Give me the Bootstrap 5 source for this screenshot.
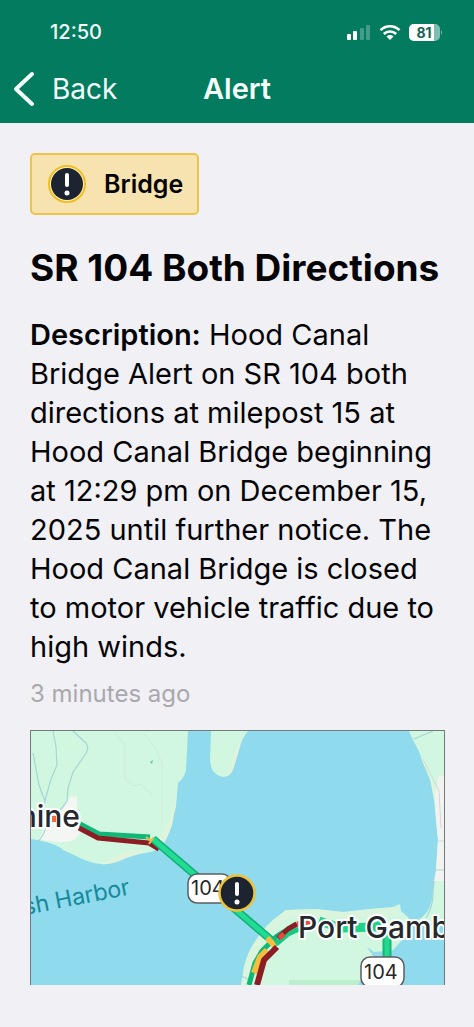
<!DOCTYPE html>
<html lang="en">
<head>
<meta charset="utf-8">
<meta name="viewport" content="width=device-width, initial-scale=1">
<title>Alert</title>
<link rel="stylesheet" href="https://cdn.jsdelivr.net/npm/bootstrap@5.3.0/dist/css/bootstrap.min.css">
<style>
  body { background: #f1f0f5; color: #050507; font-family: Inter, "Liberation Sans", sans-serif; }
  .app-header { background: #037b5f; color: #f4fffc; }
  .status-row { padding: 16px 32px 0 50px; height: 48px; font-size: 20px; font-weight: 500; line-height: 32px; }
  .title-row { height: 75px; padding: 6px 14px 0; }
  .back-btn { font-size: 28px; line-height: 40px; color: inherit; gap: 16px; }
  .screen-title { font-size: 29px; line-height: 40px; font-weight: 600; }
  .page-body { padding: 30px 29px 40px 30px; }
  .category-chip { background: #f7e3b0; border: 2px solid #ecc44c; border-radius: 5px; height: 62px; padding: 0 14px 0 16px; gap: 18px; font-size: 25px; line-height: 32px; font-weight: 600; }
  .alert-heading-text { font-size: 37px; line-height: 44px; font-weight: 700; margin: 31px 0 25px; }
  .alert-copy { font-size: 29px; line-height: 39px; margin: 0 0 12px; }
  .alert-copy strong { font-weight: 600; }
  .posted-at { font-size: 24px; line-height: 32px; color: #a9a8ad; margin: 0 0 20px; }
  .map-frame { border: 1px solid #75797b; border-bottom: 0; }
</style>
</head>
<body>
<header class="app-header">
  <div class="status-row d-flex justify-content-between align-items-center">
    <span>12:50</span>
    <svg width="96" height="20" viewBox="0 0 96 20" role="img" aria-label="Signal, Wi-Fi, battery 81 percent">
      <g fill="#fff">
        <rect x="1" y="12" width="4" height="6" rx="1"/><rect x="7" y="9" width="4" height="9" rx="1"/>
        <rect x="14" y="6" width="4" height="12" rx="1" opacity=".25"/><rect x="20" y="3" width="4" height="15" rx="1" opacity=".25"/>
        <path d="M40.500 14.500L44 18l3.500-3.500a5 5 0 0 0-7 0Z"/>
        <rect x="63" y="2" width="31" height="17" rx="5" opacity=".5"/>
        <path d="M68 2h20v17H68a5 5 0 0 1-5-5V7a5 5 0 0 1 5-5Z"/>
        <path d="M95 8q2 2 0 5Z" opacity=".5"/>
      </g>
      <g fill="none" stroke="#fff" stroke-width="2.600"><path d="M34.500 8.200a13.500 13.500 0 0 1 19 0"/><path d="M37.800 12a9 9 0 0 1 12.400 0"/></g>
      <text x="78" y="16" text-anchor="middle" font-size="14" font-weight="700" fill="#12644f">81</text>
    </svg>
  </div>
  <nav class="title-row row g-0 align-items-center">
    <div class="col">
      <button type="button" class="back-btn btn p-0 border-0 d-flex align-items-center">
        <svg width="22" height="36" viewBox="0 0 22 36" fill="none" stroke="currentColor" stroke-width="4" stroke-linecap="round" stroke-linejoin="round" aria-hidden="true"><path d="M18 3L2 18l16 15"/></svg>
        <span>Back</span>
      </button>
    </div>
    <h1 class="screen-title col-auto mb-0">Alert</h1>
    <div class="col"></div>
  </nav>
</header>

<main class="page-body">
  <div class="category-chip d-inline-flex align-items-center">
    <svg width="38" height="38" viewBox="0 0 38 38" aria-hidden="true">
      <circle cx="19" cy="19" r="18" fill="#fff0b8" stroke="#f0be22" stroke-width="2"/><circle cx="19" cy="19" r="16" fill="#1b2430"/>
      <path d="M19 10v10" stroke="#fff" stroke-width="4" stroke-linecap="round"/><circle cx="19" cy="28" r="2.500" fill="#fff"/>
    </svg>
    <span>Bridge</span>
  </div>
  <h2 class="alert-heading-text">SR 104 Both Directions</h2>
  <p class="alert-copy"><strong>Description:</strong> Hood Canal Bridge Alert on SR 104 both directions at milepost 15 at Hood Canal Bridge beginning at 12:29 pm on December 15, 2025 until further notice. The Hood Canal Bridge is closed to motor vehicle traffic due to high winds.</p>
  <p class="posted-at">3 minutes ago</p>

  <div class="map-frame overflow-hidden">
    <svg class="d-block w-100" viewBox="0 0 413 254" role="img" aria-label="Map of the Hood Canal Bridge">
      <rect width="413" height="254" fill="#8fdaed"/>
      <!-- shorelines -->
      <g fill="#d1f7e0">
        <path d="M0 0H157L155 39Q154 46 147 52L145 76L138 102Q134 112 130 117L120 121Q105 123 95 127Q80 134 70 133Q58 132 45 125L32 119Q26 112 0 108Z"/>
        <path d="M180 0L179 29Q180 37 182 40Q186 45 192 46Q199 46 202 36L207 19Q210 9 217 0Z"/>
        <path d="M378 0Q383 12 388 20L392 32Q398 42 400 52Q404 70 405 89L407 109L405 139Q403 160 400 172Q398 182 386 190L413 195V0Z"/>
        <path d="M210 254L213 236Q217 219 225 209Q232 197 242 189L255 179L285 178L312 181L338 178L362 176L369 173L370 180L378 187L374 206L362 219L337 232L327 254Z"/>
      </g>
      <g fill="#e1f3dc">
        <path d="M145 64Q140 74 140 86Q136 98 126 110L130 114Q139 104 142 90Z"/>
        <path d="M205 17Q201 29 199 40L194 45Q200 46 203 36L211 9Z"/>
        <path d="M70 133Q82 134 95 127L119 119L96 120Z"/>
        <path d="M378 0Q383 12 388 20L392 32L400 52L404 75L407 60L397 40Z" opacity=".7"/>
        <path d="M255 179L285 178L312 181L362 177L369 184L312 187L258 186Q228 205 218 254H210L213 236Q219 212 242 189Z" opacity=".65"/>
      </g>
      <path d="M258 249H330L327 254H258Z" fill="#bbefcd"/>
      <path d="M413 44L407 46L406 57L404 63L405 89L407 109L405 139L403 150H413Z" fill="#f2f3f1"/>
      <path d="M39 66L46 65V91Q54 103 41 110Q26 113 8 108L13 98L28 84Z" fill="#f4f6f3"/>
      <path d="M336 216l7 5 11-1-4 7-8-2z" fill="#95dbe8"/>
      <!-- creeks and minor roads -->
      <g fill="none" stroke="#a7d5d6" stroke-width="1.200">
        <path d="M2 22L5 38L8 54L14 70"/><path d="M22 0L25 16L26 34L20 48L15 66L13 74"/>
        <path d="M42 0L55 12Q59 17 54 24L42 41L37 57L36 70L31 77L18 90L12 104L6 112"/>
        <path d="M383 8L402 0M401 139H413M395 187Q402 176 402 163V148M210 245L219 249"/>
      </g>
      <g fill="none" stroke="#cdeadb" stroke-width="1"><path d="M84 2L94 14V48L102 55L110 53L122 65"/><path d="M112 2L123 15L131 32V92"/></g>
      <path d="M392 28L399 42L408 60L410 97M407 110H413" fill="none" stroke="#d3d9d6" stroke-width="1"/>
      <path d="M119 31l3-2-1 4z" fill="#71bda9"/>
      <!-- traffic -->
      <g fill="none" stroke-linejoin="round">
        <path d="M49 93L68 103L119 106" stroke="#10b878" stroke-width="5"/>
        <path d="M48 97L67 107L118 112L128 118" stroke="#8c1d23" stroke-width="5"/>
        <path d="M122 108L246 214" stroke="#0eae76" stroke-width="8"/>
        <path d="M122 108L246 214" stroke="#23dc93" stroke-width="5"/>
        <path d="M115 106l5 4 2-3-4 6" stroke="#efb947" stroke-width="2"/>
        <path d="M218 254L224 232L231 220L246 205L265 193" stroke="#10b878" stroke-width="5"/>
        <path d="M223 242L229 226L236 219" stroke="#f4be40" stroke-width="6"/>
        <path d="M236 207L244 215" stroke="#f4be40" stroke-width="6"/>
        <path d="M226 254L233 229L246 216" stroke="#8c1d23" stroke-width="6"/>
        <path d="M245 213L257 203L268 198" stroke="#18c784" stroke-width="5"/>
        <path d="M247 207L257 198L266 193" stroke="#8c1d23" stroke-width="5"/>
        <path d="M248 207l5-4M266 193L283 190" stroke="#e6493f" stroke-width="5"/>
        <path d="M288 190L310 197L345 196L352 193" stroke="#20d28c" stroke-width="9"/>
        <path d="M356 203V228" stroke="#10b878" stroke-width="9"/><path d="M356 203V228" stroke="#25d78f" stroke-width="5"/>
      </g>
      <!-- route shields -->
      <g fill="#fff" stroke="#5b5e61" stroke-width="1.500"><rect x="157" y="143" width="43" height="29" rx="9"/><rect x="330" y="226" width="43" height="30" rx="9"/></g>
      <g font-size="20" fill="#26282b"><text x="160" y="164">104</text><text x="333" y="248">104</text></g>
      <!-- alert pin -->
      <circle cx="206" cy="162" r="17.500" fill="#1b2430" stroke="#efc138" stroke-width="2.500"/>
      <path d="M206 153v10" stroke="#fff" stroke-width="4" stroke-linecap="round"/><circle cx="206" cy="171" r="2.500" fill="#fff"/>
      <!-- place names -->
      <g font-size="30" font-weight="500" fill="#25282c" stroke="#fff" stroke-width="4" stroke-linejoin="round" paint-order="stroke">
        <text x="49" y="96" text-anchor="end">hine</text><text x="267" y="207">Port Gamb</text>
      </g>
      <path d="M21 85h4v6h-4z" fill="#f36a3e"/>
      <text transform="translate(-6 184) rotate(-11)" font-size="23" fill="#16899a">sh Harbor</text>
    </svg>
  </div>
</main>
<script src="https://cdn.jsdelivr.net/npm/bootstrap@5.3.0/dist/js/bootstrap.bundle.min.js"></script>
</body>
</html>
